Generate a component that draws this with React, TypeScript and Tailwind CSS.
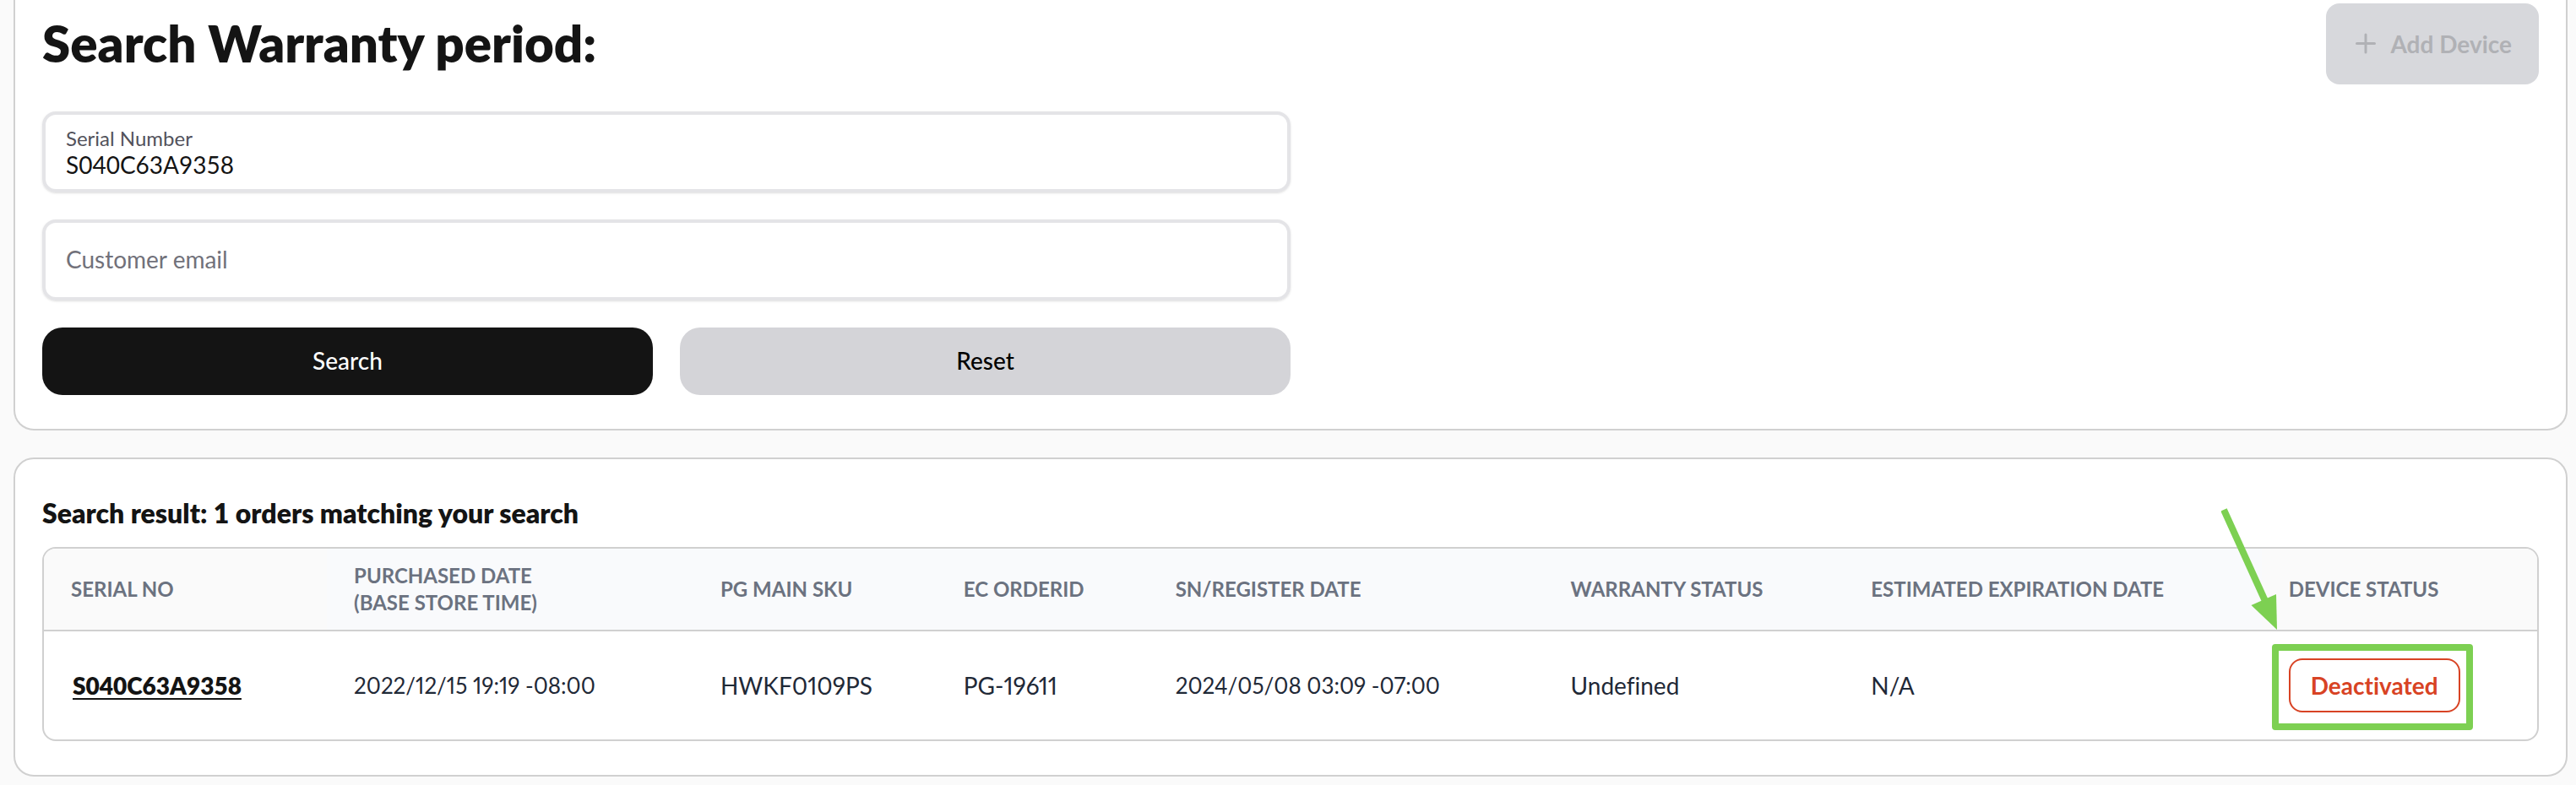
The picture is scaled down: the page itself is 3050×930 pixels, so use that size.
import { useState, type ReactNode } from "react";

type Column = { label: ReactNode; width: string };

const columns: Column[] = [
  { label: "SERIAL NO", width: "w-[11.35%]" },
  {
    label: (
      <>
        PURCHASED DATE
        <br />
        (BASE STORE TIME)
      </>
    ),
    width: "w-[14.7%]",
  },
  { label: "PG MAIN SKU", width: "w-[9.75%]" },
  { label: "EC ORDERID", width: "w-[8.5%]" },
  { label: "SN/REGISTER DATE", width: "w-[15.85%]" },
  { label: "WARRANTY STATUS", width: "w-[12.05%]" },
  { label: "ESTIMATED EXPIRATION DATE", width: "w-[16.75%]" },
  { label: "DEVICE STATUS", width: "w-[11.05%]" },
];

function Card({ className, children }: { className: string; children: ReactNode }) {
  return (
    <section className={`border-2 border-[#d0d0d0] bg-white px-8 ${className}`}>
      {children}
    </section>
  );
}

function SearchForm() {
  const [serial, setSerial] = useState("S040C63A9358");
  const [email, setEmail] = useState("");

  const reset = () => {
    setSerial("");
    setEmail("");
  };

  return (
    <form
      className="mt-8 flex w-1/2 flex-col gap-8"
      onSubmit={(e) => e.preventDefault()}
      onReset={reset}
    >
      <div className="flex h-24 flex-col justify-center rounded-2xl border-4 border-[#e4e4e7] px-6 pb-0.5 shadow-sm">
        <label htmlFor="serial" className="text-2xl leading-8 text-[#52525b]">
          Serial Number
        </label>
        <input
          id="serial"
          value={serial}
          onChange={(e) => setSerial(e.target.value)}
          className="h-[30px] w-full bg-transparent text-[28px] text-[#141414] outline-none"
        />
      </div>
      <div className="flex h-24 items-center rounded-2xl border-4 border-[#e4e4e7] px-6 pb-0.5 shadow-sm">
        <input
          id="email"
          aria-label="Customer email"
          placeholder="Customer email"
          value={email}
          onChange={(e) => setEmail(e.target.value)}
          className="h-10 w-full bg-transparent text-[28px] text-[#141414] outline-none placeholder:text-[#71717a]"
        />
      </div>
      <div className="grid grid-cols-2 gap-8">
        <button type="submit" className="h-20 rounded-3xl bg-[#141414] pb-0.5 text-[28px] font-medium text-white">
          Search
        </button>
        <button type="reset" className="h-20 rounded-3xl bg-[#d4d4d8] pb-0.5 text-[28px] font-medium text-black">
          Reset
        </button>
      </div>
    </form>
  );
}

function StatusCallout({ children }: { children: ReactNode }) {
  return (
    <div className="relative inline-block align-middle">
      {children}
      <div className="pointer-events-none absolute -top-[17px] -right-[15px] -bottom-[21px] -left-[20px] rounded-sm border-8 border-[#7dd052]" />
      <svg
        className="pointer-events-none absolute -top-[180px] -left-[80px]"
        width="70"
        height="148"
        viewBox="0 0 70 148"
        aria-hidden="true"
      >
        <path d="M3 4 52 112" stroke="#7dd052" strokeWidth="8" fill="none" />
        <path d="M35.500 117 65 104 66 146Z" fill="#7dd052" />
      </svg>
    </div>
  );
}

function ResultTable() {
  return (
    <table className="mt-5 w-full table-fixed border-separate border-spacing-0 rounded-2xl border-2 border-[#d0d0d0] text-left">
      <thead>
        <tr>
          {columns.map((column, index) => (
            <th
              key={index}
              scope="col"
              className={`h-[98px] border-b-2 border-[#d0d0d0] bg-[#f9fafc] pl-8 text-2xl leading-8 font-bold whitespace-nowrap text-[#6b7280] first:rounded-tl-[14px] first:bg-[#fafafa] last:rounded-tr-[14px] last:bg-[#fafafa] ${column.width}`}
            >
              {column.label}
            </th>
          ))}
        </tr>
      </thead>
      <tbody className="text-[28px] leading-10 whitespace-nowrap text-[#1f2937]">
        <tr>
          <td className="h-32 pl-8">
            <a
              href="#serial"
              className="ml-0.5 font-extrabold text-[#141414] underline decoration-2 underline-offset-4"
            >
              S040C63A9358
            </a>
          </td>
          <td className="pl-8 text-[26px] proportional-nums">2022/12/15 19:19 -08:00</td>
          <td className="pl-8 proportional-nums">HWKF0109PS</td>
          <td className="pl-8 proportional-nums">PG-19611</td>
          <td className="pl-8 text-[26px] proportional-nums">2024/05/08 03:09 -07:00</td>
          <td className="pl-8">Undefined</td>
          <td className="pl-8">N/A</td>
          <td className="pl-8">
            <StatusCallout>
              <span className="flex h-16 items-center rounded-2xl border-2 border-[#d84324] px-6 font-bold text-[#d84324]">
                Deactivated
              </span>
            </StatusCallout>
          </td>
        </tr>
      </tbody>
    </table>
  );
}

export default function App() {
  return (
    <main className="flex min-h-screen flex-col gap-8 bg-[#fafafa] pr-[10px] pl-4 font-['Lato','Liberation_Sans',sans-serif] text-[#141414] [font-variant-ligatures:none]">
      <Card className="rounded-b-3xl border-t-0 pt-1 pb-10">
        <header className="flex items-center justify-between">
          <h1 className="pb-0.5 text-[60px] leading-none font-extrabold">Search Warranty period:</h1>
          <button
            type="button"
            disabled
            className="flex h-24 items-center gap-3 rounded-2xl bg-[#d7d8dc] px-8 text-[28px] font-bold text-[#b0b1b5]"
          >
            <svg width="32" height="32" viewBox="0 0 32 32" fill="none" stroke="currentColor" strokeWidth="3" strokeLinecap="round" aria-hidden="true">
              <path d="M15 5V26M4.500 15.500H25.500" />
            </svg>
            Add Device
          </button>
        </header>
        <SearchForm />
      </Card>
      <Card className="rounded-3xl pt-11 pb-10">
        <h2 className="text-[32px] leading-10 font-extrabold">
          Search result: 1 orders matching your search
        </h2>
        <ResultTable />
      </Card>
    </main>
  );
}
